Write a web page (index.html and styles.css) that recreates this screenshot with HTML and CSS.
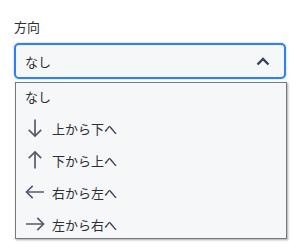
FILE: index.html
```html
<!DOCTYPE html>
<html lang="ja">
<head>
<meta charset="utf-8">
<link rel="stylesheet" href="styles.css">
</head>
<body>
<div class="field">
  <div class="label">方向</div>
  <div class="select">
    <span class="value">なし</span>
    <svg class="chev" width="14" height="9" viewBox="0 0 14 9"><path d="M1.5 7.5 L7 2 L12.5 7.5" fill="none" stroke="#3a4055" stroke-width="2.4"/></svg>
  </div>
  <div class="under"></div>
  <ul class="menu">
    <li class="item first"><span>なし</span></li>
    <li class="item">
      <svg class="ico" width="20" height="20" viewBox="0 0 20 20"><path d="M10 1.5 V18 M3.8 11.8 L10 18 L16.2 11.8" fill="none" stroke="#555b6e" stroke-width="1.7"/></svg>
      <span>上から下へ</span></li>
    <li class="item">
      <svg class="ico" width="20" height="20" viewBox="0 0 20 20"><path d="M10 18.5 V2 M3.8 8.2 L10 2 L16.2 8.2" fill="none" stroke="#555b6e" stroke-width="1.7"/></svg>
      <span>下から上へ</span></li>
    <li class="item">
      <svg class="ico" width="20" height="20" viewBox="0 0 20 20"><path d="M19 10 H1.5 M7.7 3.8 L1.5 10 L7.7 16.2" fill="none" stroke="#555b6e" stroke-width="1.7"/></svg>
      <span>右から左へ</span></li>
    <li class="item">
      <svg class="ico" width="20" height="20" viewBox="0 0 20 20"><path d="M1 10 H18.5 M12.3 3.8 L18.5 10 L12.3 16.2" fill="none" stroke="#555b6e" stroke-width="1.7"/></svg>
      <span>左から右へ</span></li>
  </ul>
</div>
</body>
</html>
```
FILE: styles.css
```css
html, body {
  margin: 0;
  padding: 0;
  background: #ffffff;
}
body {
  font-family: "Noto Sans CJK JP", "Noto Sans", sans-serif;
  color: #2b2f36;
  width: 299px;
  height: 249px;
  overflow: hidden;
}
.field {
  position: relative;
  padding: 17px 13px 0 14px;
}
.label {
  font-size: 13px;
  line-height: 20px;
  height: 20px;
  margin-bottom: 6px;
}
.select {
  box-sizing: border-box;
  height: 36px;
  border: 2px solid #2f80f5;
  border-radius: 5px;
  background: #f6f7f9;
  display: flex;
  align-items: center;
  justify-content: space-between;
  padding: 0 14px 0 9px;
  font-size: 13px;
  box-shadow: 0 0 2px rgba(47,128,245,0.5);
}
.chev {
  display: block;
}
.under {
  height: 20px;
  border-left: 1px solid #e4e5e8;
  border-right: 1px solid #e4e5e8;
  margin: 140px 0 0 1px;
}
.menu {
  position: absolute;
  left: 15px;
  top: 82px;
  width: 272px;
  height: 157px;
  box-sizing: border-box;
  margin: 0;
  padding: 0;
  list-style: none;
  background: #f6f7f9;
  border: 1px solid #77797e;
  box-shadow: 1px 1px 2px rgba(0,0,0,0.35);
  overflow: hidden;
}
.item {
  display: flex;
  align-items: center;
  height: 32px;
  padding-left: 9px;
  font-size: 13px;
  gap: 7px;
}
.item.first {
  height: 29px;
  padding-bottom: 2px;
  box-sizing: border-box;
}
.ico {
  display: block;
  flex: none;
}
```
